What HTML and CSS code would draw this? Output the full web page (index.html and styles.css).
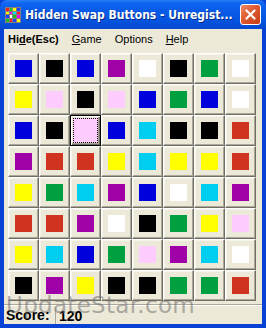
FILE: index.html
```html
<!DOCTYPE html>
<html lang="en">
    <head>
        <meta charset="UTF-8" />
        <title>Hidden Swap Buttons</title>
        <link rel="stylesheet" href="styles.css">
    </head>

    <body>
        <div class="window">
            <!-- 타이틀바 -->
            <div class="titlebar">
                <svg class="appicon" width="16" height="16" viewBox="0 0 16 16">
                    <rect width="16" height="16" fill="#808080" />
                    <rect x="1" y="1" width="3" height="3" fill="#ff2020" />
                    <rect x="5" y="1" width="2" height="3" fill="#20c020" />
                    <rect x="8" y="1" width="3" height="3" fill="#ffff00" />
                    <rect x="12" y="1" width="3" height="3" fill="#2040ff" />
                    <rect x="1" y="5" width="3" height="2" fill="#ffff00" />
                    <rect x="5" y="5" width="2" height="2" fill="#ff00ff" />
                    <rect x="8" y="5" width="3" height="2" fill="#00e0ff" />
                    <rect x="12" y="5" width="3" height="2" fill="#ff2020" />
                    <rect x="1" y="8" width="3" height="3" fill="#2040ff" />
                    <rect x="5" y="8" width="2" height="3" fill="#ffffff" />
                    <rect x="8" y="8" width="3" height="3" fill="#20c020" />
                    <rect x="12" y="8" width="3" height="3" fill="#ff00ff" />
                    <rect x="1" y="12" width="3" height="3" fill="#20c020" />
                    <rect x="5" y="12" width="2" height="3" fill="#ff2020" />
                    <rect x="8" y="12" width="3" height="3" fill="#2040ff" />
                    <rect x="12" y="12" width="3" height="3" fill="#ffff00" />
                </svg>
                <span class="title">Hidden Swap Buttons - Unregist...</span>
                <span class="close">
                    <svg width="11" height="11" viewBox="0 0 11 11">
                        <path d="M1.5 1.5 L9.5 9.5 M9.5 1.5 L1.5 9.5" stroke="#fff" stroke-width="2.2" stroke-linecap="round" />
                    </svg>
                </span>
            </div>

            <div class="client">
                <!-- 메뉴 -->
                <div class="menubar">
                    <span class="menu bold">Hi<u>d</u>e(Esc)</span>
                    <span class="menu"><u>G</u>ame</span>
                    <span class="menu">Options</span>
                    <span class="menu"><u>H</u>elp</span>
                </div>

                <!-- 버튼판 -->
                <div class="board">
                    <!-- row 1 -->
                    <div class="btn"><i class="sq blue"></i></div>
                    <div class="btn"><i class="sq black"></i></div>
                    <div class="btn"><i class="sq blue"></i></div>
                    <div class="btn"><i class="sq purple"></i></div>
                    <div class="btn"><i class="sq white"></i></div>
                    <div class="btn"><i class="sq black"></i></div>
                    <div class="btn"><i class="sq green"></i></div>
                    <div class="btn"><i class="sq white"></i></div>
                    <!-- row 2 -->
                    <div class="btn"><i class="sq yellow"></i></div>
                    <div class="btn"><i class="sq pink"></i></div>
                    <div class="btn"><i class="sq black"></i></div>
                    <div class="btn"><i class="sq pink"></i></div>
                    <div class="btn"><i class="sq blue"></i></div>
                    <div class="btn"><i class="sq green"></i></div>
                    <div class="btn"><i class="sq blue"></i></div>
                    <div class="btn"><i class="sq white"></i></div>
                    <!-- row 3 -->
                    <div class="btn"><i class="sq blue"></i></div>
                    <div class="btn"><i class="sq black"></i></div>
                    <div class="btn focus"><i class="sq pink"></i></div>
                    <div class="btn"><i class="sq blue"></i></div>
                    <div class="btn"><i class="sq cyan"></i></div>
                    <div class="btn"><i class="sq black"></i></div>
                    <div class="btn"><i class="sq black"></i></div>
                    <div class="btn"><i class="sq red"></i></div>
                    <!-- row 4 -->
                    <div class="btn"><i class="sq purple"></i></div>
                    <div class="btn"><i class="sq red"></i></div>
                    <div class="btn"><i class="sq red"></i></div>
                    <div class="btn"><i class="sq yellow"></i></div>
                    <div class="btn"><i class="sq cyan"></i></div>
                    <div class="btn"><i class="sq yellow"></i></div>
                    <div class="btn"><i class="sq yellow"></i></div>
                    <div class="btn"><i class="sq red"></i></div>
                    <!-- row 5 -->
                    <div class="btn"><i class="sq yellow"></i></div>
                    <div class="btn"><i class="sq green"></i></div>
                    <div class="btn"><i class="sq cyan"></i></div>
                    <div class="btn"><i class="sq purple"></i></div>
                    <div class="btn"><i class="sq blue"></i></div>
                    <div class="btn"><i class="sq white"></i></div>
                    <div class="btn"><i class="sq cyan"></i></div>
                    <div class="btn"><i class="sq purple"></i></div>
                    <!-- row 6 -->
                    <div class="btn"><i class="sq red"></i></div>
                    <div class="btn"><i class="sq red"></i></div>
                    <div class="btn"><i class="sq purple"></i></div>
                    <div class="btn"><i class="sq white"></i></div>
                    <div class="btn"><i class="sq black"></i></div>
                    <div class="btn"><i class="sq green"></i></div>
                    <div class="btn"><i class="sq yellow"></i></div>
                    <div class="btn"><i class="sq pink"></i></div>
                    <!-- row 7 -->
                    <div class="btn"><i class="sq yellow"></i></div>
                    <div class="btn"><i class="sq cyan"></i></div>
                    <div class="btn"><i class="sq blue"></i></div>
                    <div class="btn"><i class="sq green"></i></div>
                    <div class="btn"><i class="sq pink"></i></div>
                    <div class="btn"><i class="sq purple"></i></div>
                    <div class="btn"><i class="sq cyan"></i></div>
                    <div class="btn"><i class="sq white"></i></div>
                    <!-- row 8 -->
                    <div class="btn"><i class="sq black"></i></div>
                    <div class="btn"><i class="sq purple"></i></div>
                    <div class="btn"><i class="sq yellow"></i></div>
                    <div class="btn"><i class="sq black"></i></div>
                    <div class="btn"><i class="sq black"></i></div>
                    <div class="btn"><i class="sq green"></i></div>
                    <div class="btn"><i class="sq green"></i></div>
                    <div class="btn"><i class="sq red"></i></div>
                </div>

                <!-- 상태바 -->
                <div class="statusbar">
                    <span class="label">Score:</span>
                    <span class="value">120</span>
                </div>
            </div>

            <div class="watermark">UpdateStar.com</div>
        </div>
    </body>
</html>
```

FILE: styles.css
```css
body {
    margin: 0;
    background-color: #fff;
}

.window {
    position: relative;
    width: 266px;
    height: 328px;
    display: flex;
    flex-direction: column;
    background: #0842d4;
    overflow: hidden;
}

/* 타이틀바 */
.titlebar {
    height: 29px;
    flex: none;
    display: flex;
    align-items: center;
    padding: 0 5px;
    background: linear-gradient(
        to bottom,
        #2b7cf4 0px,
        #0f66f2 3px,
        #0a5ce8 10px,
        #0555e0 20px,
        #0448d0 29px
    );
    border-radius: 7px 7px 0 0;
}
.appicon {
    flex: none;
    margin-right: 4px;
}
.title {
    flex: 1;
    min-width: 0;
    color: #fff;
    font-family: "DejaVu Sans Condensed", "DejaVu Sans", sans-serif;
    font-weight: bold;
    font-size: 12px;
    white-space: nowrap;
    text-shadow: 1px 1px 0 #0a2c8a;
}
.close {
    flex: none;
    width: 19px;
    height: 19px;
    display: flex;
    align-items: center;
    justify-content: center;
    border: 1px solid #fff;
    border-radius: 3px;
    background: linear-gradient(135deg, #ec8a68 0%, #df5a32 45%, #c63c14 100%);
    margin-left: 4px;
}

/* 본문영역 */
.client {
    flex: 1;
    margin: 0 4px 4px 4px;
    background: #ece9d8;
    display: flex;
    flex-direction: column;
}

.menubar {
    height: 19px;
    display: flex;
    align-items: center;
    gap: 13px;
    padding-left: 4px;
    font-family: "Liberation Sans", sans-serif;
    font-size: 11px;
    color: #000;
}
.menu.bold {
    font-weight: bold;
}
.menu u {
    text-underline-offset: 1px;
}

.board {
    display: grid;
    grid-template-columns: repeat(8, 31px);
    grid-auto-rows: 31px;
    padding: 5px 0 0 4px;
}

.btn {
    box-sizing: border-box;
    border: 1px solid;
    border-color: #fff #716f64 #716f64 #fff;
    box-shadow: inset -1px -1px #aca899, inset 1px 1px #f5f4ea;
    background: #ece9d8;
    display: flex;
    align-items: center;
    justify-content: center;
}
.btn.focus {
    border-color: #000;
    box-shadow: inset 1px 1px #fff, inset -1px -1px #716f64, inset -2px -2px #aca899;
}

.sq {
    display: block;
    width: 17px;
    height: 17px;
}
.focus .sq {
    box-sizing: border-box;
    width: 25px;
    height: 25px;
    border: 1px dotted #000;
}

.blue { background: #0000dc; }
.black { background: #000; }
.purple { background: #a000a8; }
.white { background: #fff; }
.green { background: #00a040; }
.yellow { background: #ffff00; }
.pink { background: #ffccff; }
.cyan { background: #00cef0; }
.red { background: #d03420; }

/* 상태바 */
.statusbar {
    margin-top: auto;
    height: 19px;
    border-top: 1px solid #aca899;
    box-shadow: inset 0 1px #fff;
    display: flex;
    align-items: center;
    font-family: "Liberation Sans", sans-serif;
    font-size: 14px;
    font-weight: bold;
    color: #000;
}
.statusbar .label {
    padding-left: 2px;
    width: 49px;
}
.statusbar .value {
    align-self: stretch;
    display: flex;
    align-items: center;
    padding-left: 3px;
    margin-top: 3px;
    border-left: 1px solid #aca899;
}

/* 워터마크 */
.watermark {
    position: absolute;
    left: 6px;
    top: 292px;
    font-family: "DejaVu Sans", sans-serif;
    font-size: 23px;
    color: rgba(110, 110, 110, 0.55);
    letter-spacing: 0.3px;
    pointer-events: none;
}
```
